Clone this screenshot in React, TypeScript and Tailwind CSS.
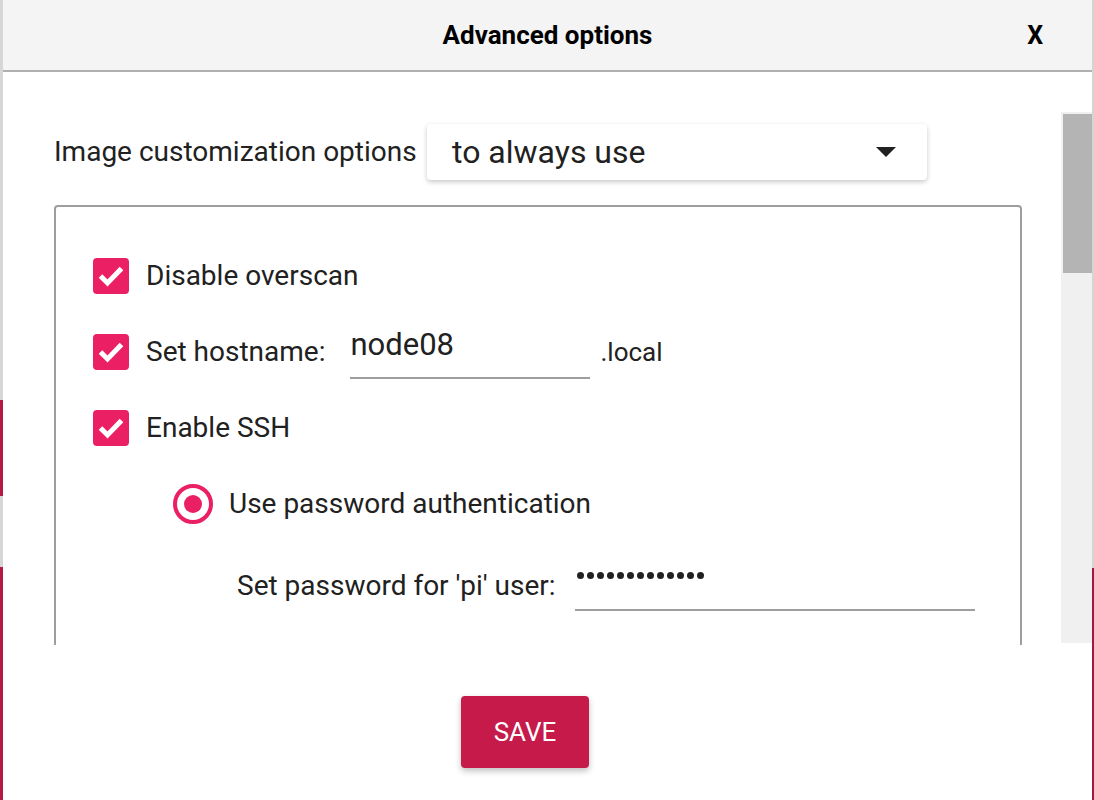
import React from 'react';

const Checkbox: React.FC = () => (
  <div className="flex h-[36px] w-[36px] shrink-0 items-center justify-center rounded-[4px] bg-[#eb1f63]">
    <svg width="36" height="36" viewBox="0 0 36 36">
      <polyline points="7.5,18 14.5,25 28.5,10.5" fill="none" stroke="white" strokeWidth="5" />
    </svg>
  </div>
);

const CheckRow: React.FC<{ label: string; className?: string; children?: React.ReactNode }> = ({
  label,
  className = '',
  children,
}) => (
  <div className={`flex h-[36px] items-center ${className}`}>
    <Checkbox />
    <span className="ml-[17px] text-[28px] leading-none text-[#212121]">{label}</span>
    {children}
  </div>
);

export default function App() {
  return (
    <div className="flex h-[800px] w-[1094px] overflow-hidden bg-white font-['Roboto',sans-serif] text-[#212121]">
      {/* page behind the dialog */}
      <div className="flex w-[3px] shrink-0 flex-col">
        <div className="h-[400px] bg-[#d6d6d6]" />
        <div className="h-[96px] bg-[#b31a46]" />
        <div className="h-[71px] bg-[#d6d6d6]" />
        <div className="flex-1 bg-[#b31a46]" />
      </div>

      <div className="flex min-w-0 flex-1 flex-col">
        {/* Header */}
        <div className="grid h-[72px] shrink-0 grid-cols-[1fr_auto_1fr] items-center border-b-2 border-[#b0b0b0] bg-[#f4f4f4]">
          <div />
          <h1 className="text-[26px] font-bold leading-none text-black">Advanced options</h1>
          <div className="flex justify-end pr-[49px]">
            <span className="text-[25px] font-bold leading-none text-black">X</span>
          </div>
        </div>

        {/* Scroll area */}
        <div className="flex h-[573px] shrink-0">
          <div className="min-w-0 flex-1 overflow-hidden pl-[51px] pr-[39px] pt-[52px]">
            <div className="flex items-center">
              <span className="w-[373px] shrink-0 text-[28px] leading-none">Image customization options</span>
              <div className="flex h-[56px] w-[500px] items-center justify-between rounded-[4px] bg-white pl-[25px] pr-[31px] shadow-[0_2px_5px_rgba(0,0,0,0.22)]">
                <span className="text-[32px] leading-none text-[#212121]">to always use</span>
                <svg width="20" height="10" viewBox="0 0 20 10">
                  <polygon points="0,0 20,0 10,10" fill="#212121" />
                </svg>
              </div>
            </div>

            <div className="mt-[25px] h-[520px] rounded-[4px] border-2 border-[#9e9e9e] pl-[37px] pt-[51px]">
              <CheckRow label="Disable overscan" />

              <CheckRow label="Set hostname:" className="mt-[40px]">
                <div className="ml-[25px] mt-[4px] flex h-[50px] w-[240px] items-start border-b-2 border-[#9e9e9e]">
                  <span className="h-[32px] text-[31px] leading-[32px] text-[#212121]">node08</span>
                </div>
                <span className="ml-[10px] text-[26px] leading-none">.local</span>
              </CheckRow>

              <CheckRow label="Enable SSH" className="mt-[40px]" />

              <div className="ml-[80px] mt-[38px] flex h-[40px] items-center">
                <div className="flex h-[40px] w-[40px] items-center justify-center rounded-full border-4 border-[#eb1f63]">
                  <div className="h-[18px] w-[18px] rounded-full bg-[#eb1f63]" />
                </div>
                <span className="ml-[16px] text-[28px] leading-none">Use password authentication</span>
              </div>

              <div className="ml-[144px] mt-[37px] flex h-[50px] items-center">
                <span className="w-[338px] shrink-0 text-[28px] leading-none">Set password for 'pi' user:</span>
                <div className="h-[50px] w-[400px] border-b-2 border-[#9e9e9e] pl-[2px]">
                  <div className="flex h-[28px] items-center gap-[3px]">
                    {Array.from({ length: 13 }).map((_, i) => (
                      <div key={i} className="h-[7px] w-[7px] rounded-full bg-[#212121]" />
                    ))}
                  </div>
                </div>
              </div>
            </div>
          </div>

          {/* scrollbar */}
          <div className="w-[31px] shrink-0 pt-[40px]">
            <div className="h-[531px] bg-[#f0f0f0] pl-[2px] pt-[2px]">
              <div className="h-[159px] bg-[#b4b4b4]" />
            </div>
          </div>
        </div>

        {/* Footer */}
        <div className="flex-1 pl-[458px] pt-[51px]">
          <button className="flex h-[72px] w-[128px] items-center justify-center rounded-[4px] bg-[#c51a4a] text-[26px] leading-none text-white shadow-[0_3px_6px_rgba(0,0,0,0.25)]">
            SAVE
          </button>
        </div>
      </div>

      <div className="flex w-[2px] shrink-0 flex-col">
        <div className="h-[568px] bg-[#d4d4d4]" />
        <div className="flex-1 bg-[#9b1c40]" />
      </div>
    </div>
  );
}
